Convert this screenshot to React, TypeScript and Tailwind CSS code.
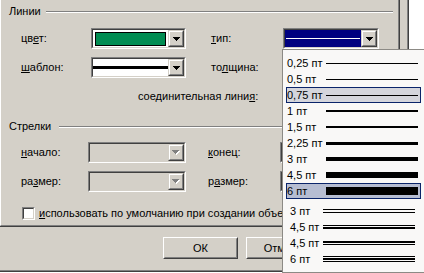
import React from "react";

function Arrow({ disabled }: { disabled?: boolean }) {
  const d = "M0 0H7V1H6V2H5V3H4V4H3V3H2V2H1V1H0Z";
  if (disabled) {
    return (
      <svg width="8" height="5" viewBox="0 0 8 5" shapeRendering="crispEdges">
        <path d={d} fill="#ffffff" transform="translate(1 1)" />
        <path d={d} fill="#808080" />
      </svg>
    );
  }
  return (
    <svg width="7" height="4" viewBox="0 0 7 4" shapeRendering="crispEdges">
      <path d={d} fill="#000000" />
    </svg>
  );
}

function DropBtn({ disabled }: { disabled?: boolean }) {
  return (
    <div className="w-[16px] h-full shrink-0 border border-t-[#d4d0c8] border-l-[#d4d0c8] border-r-[#404040] border-b-[#404040] bg-[#d4d0c8]">
      <div className="w-full h-full border border-t-white border-l-white border-r-[#808080] border-b-[#808080] flex items-center justify-center">
        <Arrow disabled={disabled} />
      </div>
    </div>
  );
}

function Combo({
  className,
  children,
  disabled,
  contentClass,
}: {
  className: string;
  children?: React.ReactNode;
  disabled?: boolean;
  contentClass: string;
}) {
  return (
    <div
      className={`h-[21px] shrink-0 border border-t-[#808080] border-l-[#808080] border-r-white border-b-white ${className}`}
    >
      <div className="flex h-full border border-t-[#404040] border-l-[#404040] border-r-[#d4d0c8] border-b-[#d4d0c8]">
        <div className={`flex-1 min-w-0 h-full ${contentClass}`}>{children}</div>
        <DropBtn disabled={disabled} />
      </div>
    </div>
  );
}

function Header({ title, lineClass }: { title: string; lineClass: string }) {
  return (
    <div className="flex h-[13px] shrink-0">
      <div className="ml-[8px] whitespace-nowrap">{title}</div>
      <div
        className={`flex-1 mr-[5px] mt-[6px] h-[2px] border-t border-b border-t-[#808080] border-b-white ${lineClass}`}
      />
    </div>
  );
}

function Button({ children }: { children: React.ReactNode }) {
  return (
    <div className="w-[75px] h-[22px] shrink-0 border border-t-white border-l-white border-r-[#404040] border-b-[#404040]">
      <div className="w-full h-full border border-t-[#d4d0c8] border-l-[#d4d0c8] border-r-[#808080] border-b-[#808080] flex items-center justify-center whitespace-nowrap">
        {children}
      </div>
    </div>
  );
}

function Item({
  label,
  sel,
  compound,
  children,
}: {
  label: string;
  sel?: "hover" | "checked";
  compound?: boolean;
  children: React.ReactNode;
}) {
  const cls =
    sel === "hover"
      ? "border-[#0a246a] bg-[#b6bdd2]"
      : sel === "checked"
      ? "border-[#0a246a] bg-[#d4d5dc]"
      : "border-transparent";
  return (
    <div className={`flex items-center w-[135px] h-[16px] shrink-0 border ${cls}`}>
      <div className={`shrink-0 whitespace-nowrap ${compound ? "w-[36px] pl-[3px]" : "w-[39px]"}`}>
        {label}
      </div>
      {children}
    </div>
  );
}

export default function App() {
  return (
    <div className="relative w-[424px] h-[273px] overflow-hidden bg-white font-['Liberation_Sans',Arial,sans-serif] text-[11px] leading-[13px] text-black">
      {/* dialog */}
      <div className="w-[409px] h-[272px] border-r border-b border-[#404040]">
        <div className="w-full h-full border-r border-b border-[#808080] bg-[#d4d0c8] flex flex-col">
          {/* tab page */}
          <div className="w-[400px] h-[227px] shrink-0 border-r border-b border-[#404040]">
            <div className="w-full h-full border-l border-r border-b border-l-white border-r-[#808080] border-b-[#808080] flex flex-col">
              <div className="mt-[5px]">
                <Header title="Линии" lineClass="ml-[5px]" />
              </div>

              {/* цвет / тип */}
              <div className="flex items-center h-[21px] mt-[10px] shrink-0">
                <div className="pl-[20px] w-[90px] shrink-0 whitespace-nowrap">
                  цв<u>е</u>т:
                </div>
                <Combo className="w-[95px]" contentClass="bg-white pl-[2px] pr-[2px] pt-[2px]">
                  <div className="h-[14px] border border-black bg-[#008c52]" />
                </Combo>
                <div className="ml-[25px] w-[72px] shrink-0 whitespace-nowrap">
                  <u>т</u>ип:
                </div>
                <Combo className="w-[96px]" contentClass="bg-[#000080] flex items-center px-[1px]">
                  <div className="w-full h-[1px] bg-white" />
                </Combo>
              </div>

              {/* шаблон / толщина */}
              <div className="flex items-center h-[21px] mt-[8px] shrink-0">
                <div className="pl-[20px] w-[90px] shrink-0 whitespace-nowrap">
                  <u>ш</u>аблон:
                </div>
                <Combo className="w-[95px]" contentClass="bg-white flex items-center">
                  <div className="w-full h-[3px] bg-black" />
                </Combo>
                <div className="ml-[25px] w-[72px] shrink-0 whitespace-nowrap">
                  то<u>л</u>щина:
                </div>
                <Combo className="w-[96px]" contentClass="bg-white" />
              </div>

              {/* соединительная линия */}
              <div className="flex items-center h-[21px] mt-[8px] shrink-0">
                <div className="pl-[137px] w-[282px] shrink-0 whitespace-nowrap">
                  соединительная лини<u>я</u>:
                </div>
                <Combo className="w-[96px]" contentClass="bg-white" />
              </div>

              <div className="mt-[13px]">
                <Header title="Стрелки" lineClass="ml-[8px]" />
              </div>

              {/* начало / конец */}
              <div className="flex items-center h-[21px] mt-[9px] shrink-0">
                <div className="pl-[20px] w-[87px] shrink-0 whitespace-nowrap">
                  <u>н</u>ачало:
                </div>
                <Combo className="w-[98px]" contentClass="bg-[#d4d0c8]" disabled />
                <div className="ml-[22px] w-[72px] shrink-0 whitespace-nowrap">
                  <u>к</u>онец:
                </div>
                <Combo className="w-[96px]" contentClass="bg-[#d4d0c8]" disabled />
              </div>

              {/* размер / размер */}
              <div className="flex items-center h-[21px] mt-[8px] shrink-0">
                <div className="pl-[20px] w-[87px] shrink-0 whitespace-nowrap">
                  ра<u>з</u>мер:
                </div>
                <Combo className="w-[98px]" contentClass="bg-[#d4d0c8]" disabled />
                <div className="ml-[22px] w-[72px] shrink-0 whitespace-nowrap">
                  р<u>а</u>змер:
                </div>
                <Combo className="w-[96px]" contentClass="bg-[#d4d0c8]" disabled />
              </div>

              {/* checkbox */}
              <div className="flex items-center h-[13px] mt-[15px] pl-[21px] shrink-0">
                <div className="w-[13px] h-[13px] shrink-0 border border-t-[#808080] border-l-[#808080] border-r-white border-b-white">
                  <div className="w-full h-full bg-white border border-t-[#404040] border-l-[#404040] border-r-[#d4d0c8] border-b-[#d4d0c8]" />
                </div>
                <div className="ml-[4px] w-[244px] overflow-hidden whitespace-nowrap">
                  <u>и</u>спользовать по умолчанию при создании объектов
                </div>
              </div>
            </div>
          </div>

          {/* buttons (right part hidden behind the open list) */}
          <div className="flex mt-[10px] ml-[163px] w-[119px] overflow-hidden gap-[8px]">
            <Button>ОК</Button>
            <Button>Отмена</Button>
          </div>
        </div>
      </div>

      {/* dropdown list */}
      <div className="absolute left-[282px] top-[49px] w-[150px] h-[224px] border border-[#8c8a85] bg-[#f9f8f7] pt-[5px] pl-[3px] flex flex-col">
        <Item label="0,25 пт">
          <div className="w-[92px] h-[1px] bg-black shrink-0" />
        </Item>
        <Item label="0,5 пт">
          <div className="w-[92px] h-[1px] bg-black shrink-0" />
        </Item>
        <Item label="0,75 пт" sel="checked">
          <div className="w-[92px] h-[1px] bg-black shrink-0" />
        </Item>
        <Item label="1 пт">
          <div className="w-[92px] h-[2px] bg-black shrink-0" />
        </Item>
        <Item label="1,5 пт">
          <div className="w-[92px] h-[2px] bg-black shrink-0" />
        </Item>
        <Item label="2,25 пт">
          <div className="w-[92px] h-[3px] bg-black shrink-0" />
        </Item>
        <Item label="3 пт">
          <div className="w-[92px] h-[4px] bg-black shrink-0" />
        </Item>
        <Item label="4,5 пт">
          <div className="w-[92px] h-[6px] bg-black shrink-0" />
        </Item>
        <Item label="6 пт" sel="hover">
          <div className="w-[92px] h-[8px] bg-black shrink-0" />
        </Item>

        <div className="h-[4px] shrink-0" />

        <Item label="3 пт" compound>
          <div className="w-[92px] shrink-0 flex flex-col gap-[2px]">
            <div className="h-[1px] bg-black" />
            <div className="h-[1px] bg-black" />
          </div>
        </Item>
        <Item label="4,5 пт" compound>
          <div className="w-[92px] shrink-0 flex flex-col gap-[1px]">
            <div className="h-[1px] bg-black" />
            <div className="h-[2px] bg-black" />
          </div>
        </Item>
        <Item label="4,5 пт" compound>
          <div className="w-[92px] shrink-0 flex flex-col gap-[1px]">
            <div className="h-[2px] bg-black" />
            <div className="h-[1px] bg-black" />
          </div>
        </Item>
        <Item label="6 пт" compound>
          <div className="w-[92px] shrink-0 flex flex-col gap-[1px]">
            <div className="h-[1px] bg-black" />
            <div className="h-[2px] bg-black" />
            <div className="h-[1px] bg-black" />
          </div>
        </Item>
      </div>
    </div>
  );
}
